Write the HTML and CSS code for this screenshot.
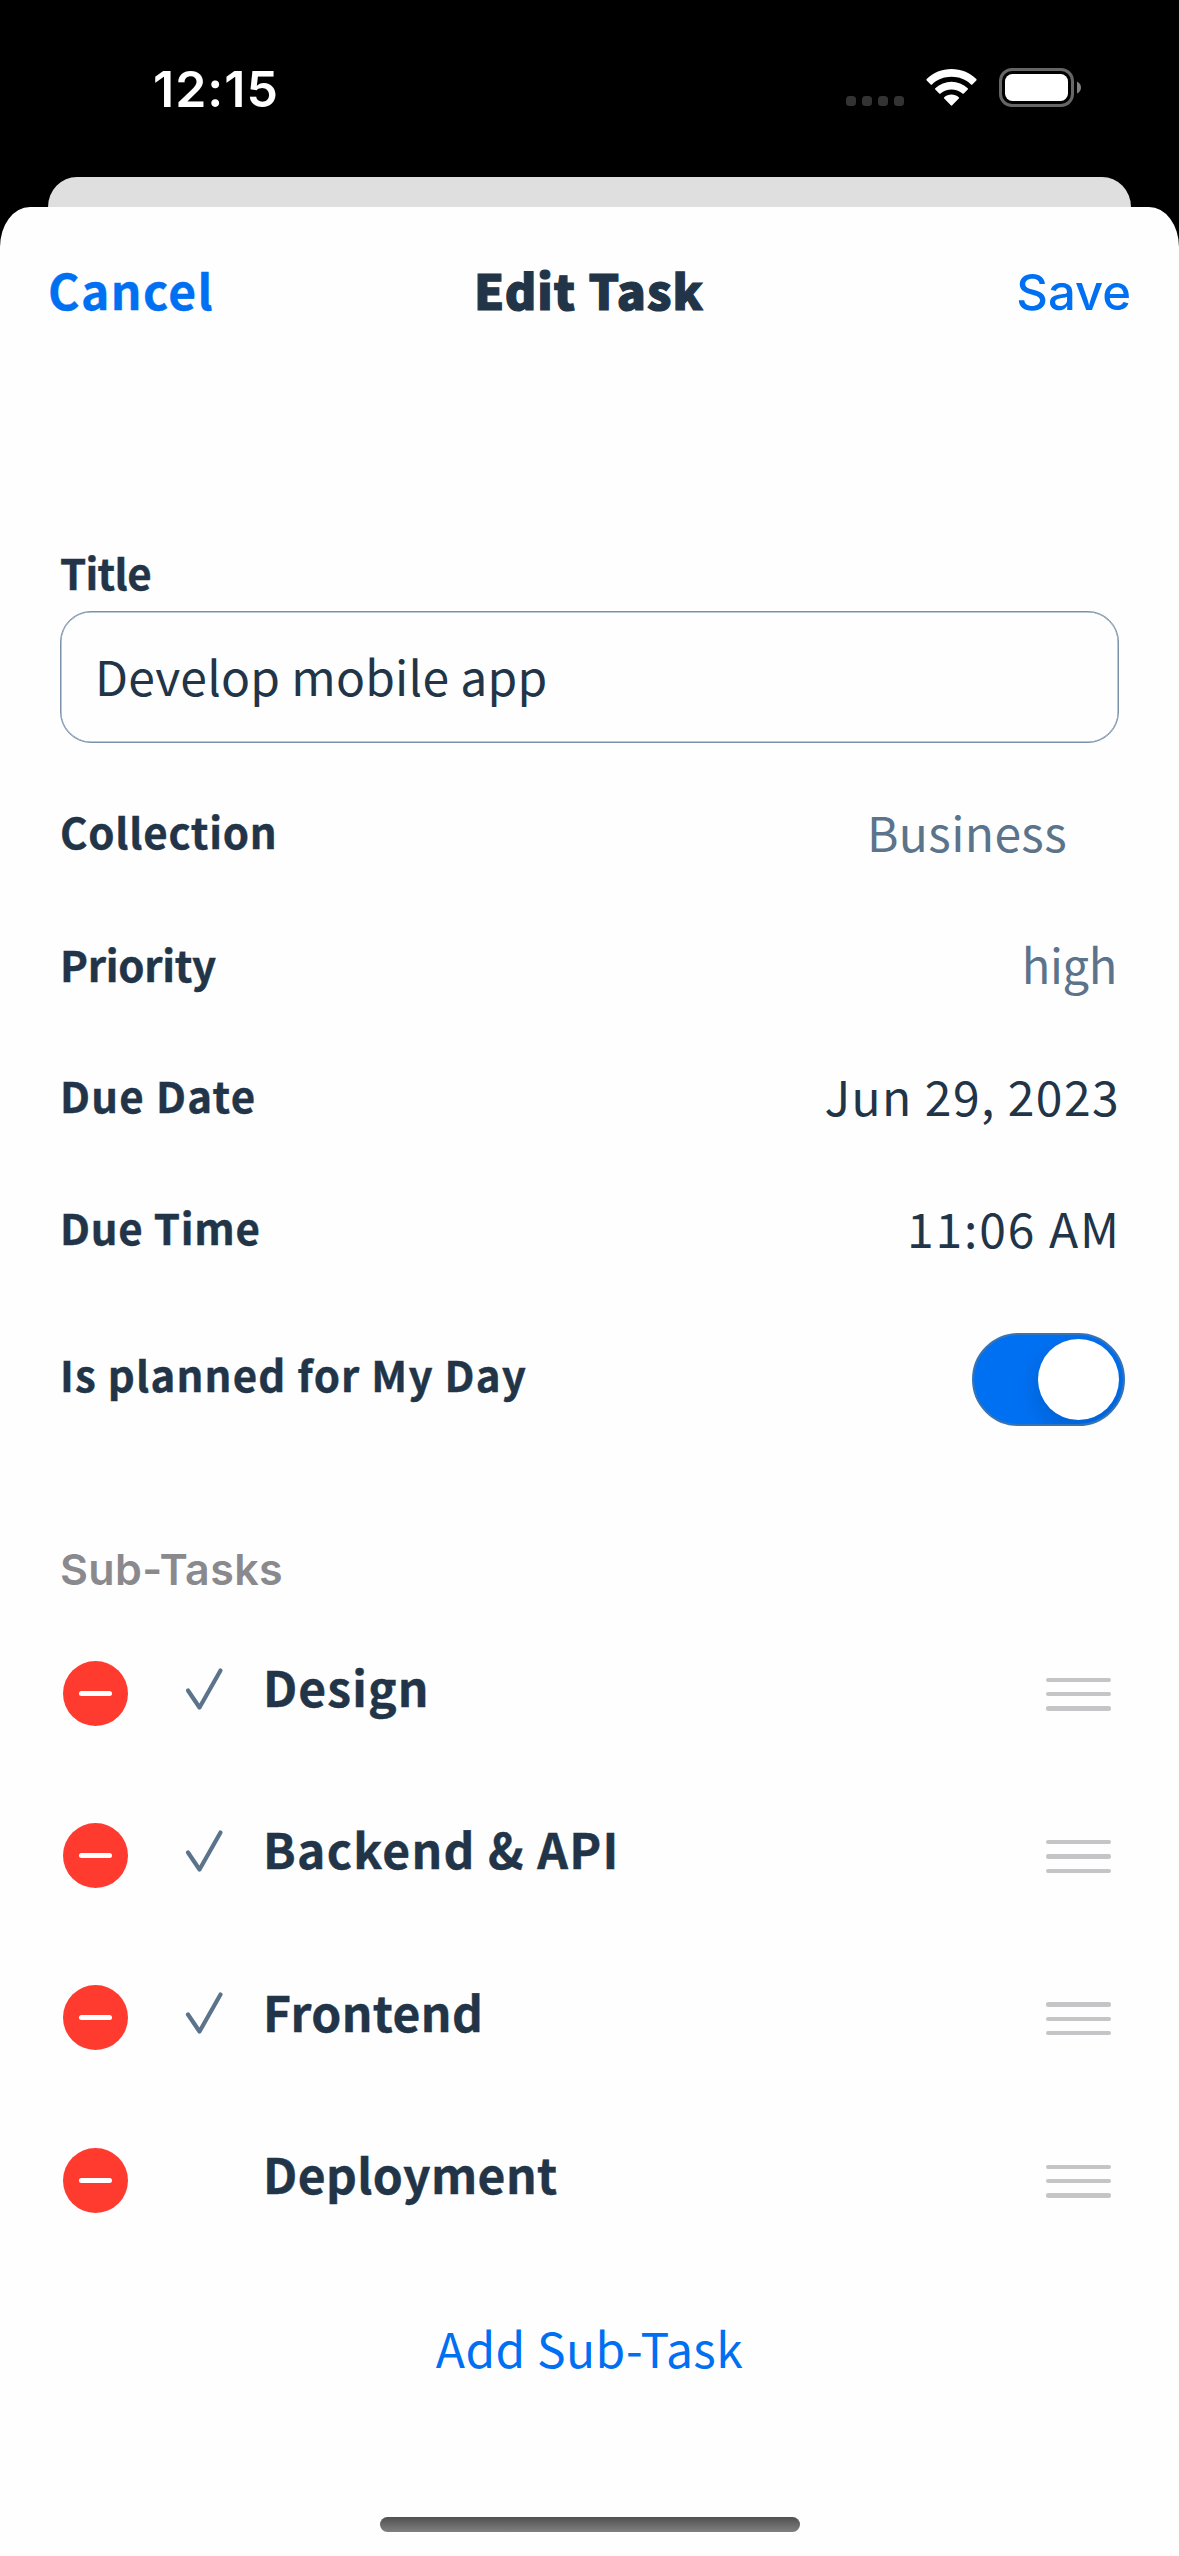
FILE: index.html
```html
<!DOCTYPE html>
<html lang="en">
<head>
  <meta charset="utf-8">
  <title>Edit Task</title>
  <link rel="stylesheet" href="styles.css">
</head>
<body>
  <div class="screen">
    <div class="status">
      <span class="time">12:15</span>
      <div class="indicators">
        <svg class="cell" width="58" height="40" viewBox="0 0 58 40">
          <rect x="0" y="29" width="10" height="10" rx="3.5"/><rect x="16" y="29" width="10" height="10" rx="3.5"/><rect x="32" y="29" width="10" height="10" rx="3.5"/><rect x="48" y="29" width="10" height="10" rx="3.5"/>
        </svg>
        <svg class="wifi" width="51" height="40" viewBox="0 0 51 40">
          <path d="M25.500 2C35 2 43.800 5.600 50.300 12Q51 12.700 50.300 13.400L46.300 17.400Q45.700 18 45 17.400C39.700 12.500 32.900 9.800 25.500 9.800S11.300 12.500 6 17.400Q5.300 18 4.700 17.400L.7 13.400Q0 12.700 .7 12C7.200 5.600 16 2 25.500 2Z"/>
          <path d="M25.500 14.800C31.500 14.800 37.200 17.100 41.700 21.200Q42.400 21.900 41.700 22.600L37.800 26.400Q37.100 27 36.400 26.400C33.400 23.900 29.500 22.500 25.500 22.500S17.600 23.900 14.600 26.400Q13.900 27 13.200 26.400L9.300 22.600Q8.600 21.900 9.300 21.200C13.800 17.100 19.500 14.800 25.500 14.800Z"/>
          <path d="M25.500 27.600C28.200 27.600 30.700 28.500 32.800 30.200Q33.500 30.900 32.800 31.600L26.200 38.300Q25.500 39 24.800 38.300L18.200 31.600Q17.500 30.900 18.200 30.200C20.300 28.500 22.800 27.600 25.500 27.600Z"/>
        </svg>
        <svg class="battery" width="82" height="40" viewBox="0 0 82 40">
          <rect class="shell" x="1.500" y="2.500" width="72" height="36" rx="11.500"/>
          <path class="nub" d="M78 14.500Q82 16.500 82 20.500T78 26.500Z"/>
          <rect class="charge" x="6" y="7" width="63" height="27" rx="7.500"/>
        </svg>
      </div>
    </div>
    <div class="peek"></div>
    <main class="sheet">
      <header class="nav">
        <a class="cancel">Cancel</a>
        <h1 class="heading">Edit Task</h1>
        <a class="save">Save</a>
      </header>
      <section class="form">
        <label class="label title-label">Title</label>
        <div class="input">Develop mobile app</div>
        <div class="row row-collection"><span class="label">Collection</span><span class="value muted business">Business</span></div>
        <div class="row row-priority"><span class="label priority">Priority</span><span class="value muted high">high</span></div>
        <div class="row row-date"><span class="label date-label">Due Date</span><span class="value date">Jun 29, 2023</span></div>
        <div class="row row-time"><span class="label">Due Time</span><span class="value clock">11:06 AM</span></div>
        <div class="row row-planned"><span class="label planned">Is planned for My Day</span><span class="toggle"><span class="knob"></span></span></div>
      </section>
      <section class="subtasks">
        <h2 class="section-title">Sub-Tasks</h2>
        <div class="task">
          <span class="remove"><span class="minus"></span></span>
          <svg class="check" width="40" height="44" viewBox="0 0 40 44"><path d="M4 23.500L15.500 40.500L36.500 3.500"/></svg>
          <span class="name design">Design</span>
          <span class="handle"><i></i><i></i><i></i></span>
        </div>
        <div class="task">
          <span class="remove"><span class="minus"></span></span>
          <svg class="check" width="40" height="44" viewBox="0 0 40 44"><path d="M4 23.500L15.500 40.500L36.500 3.500"/></svg>
          <span class="name backend">Backend &amp; API</span>
          <span class="handle"><i></i><i></i><i></i></span>
        </div>
        <div class="task">
          <span class="remove"><span class="minus"></span></span>
          <svg class="check" width="40" height="44" viewBox="0 0 40 44"><path d="M4 23.500L15.500 40.500L36.500 3.500"/></svg>
          <span class="name">Frontend</span>
          <span class="handle"><i></i><i></i><i></i></span>
        </div>
        <div class="task">
          <span class="remove"><span class="minus"></span></span>
          <span class="check"></span>
          <span class="name">Deployment</span>
          <span class="handle"><i></i><i></i><i></i></span>
        </div>
        <a class="add">Add Sub-Task</a>
      </section>
      <div class="home"></div>
    </main>
  </div>
</body>
</html>
```
FILE: styles.css
```css
* { box-sizing: border-box; }

body {
  margin: 0;
  background: #000;
  color: #223548;
  font-family: "Noto Sans CJK JP", sans-serif;
  font-size: 48px;
  line-height: 68px;
}

.screen {
  width: 1179px;
  height: 2556px;
  display: flex;
  flex-direction: column;
  overflow: hidden;
}

/* Status bar */
.status {
  height: 177px;
  flex: none;
  display: flex;
  align-items: center;
  justify-content: space-between;
  padding: 0 98px 0 153px;
}
.time {
  color: #fff;
  font: 600 50px/60px Inter, sans-serif;
  letter-spacing: 1px;
}
.indicators { display: flex; gap: 22px; margin-bottom: 3px; }
.indicators svg { display: block; }
.cell { fill: #333; }
.wifi { fill: #fff; }
.shell { fill: none; stroke: #666; stroke-width: 3; }
.nub { fill: #808080; }
.charge { fill: #fff; }

/* Sheet */
.peek {
  flex: none;
  height: 30px;
  margin: 0 48px;
  background: #dfdfdf;
  border-radius: 29px 29px 0 0 / 30px 30px 0 0;
}
.sheet {
  flex: 1;
  display: flex;
  flex-direction: column;
  background: #fefefe;
  border-radius: 30px 30px 0 0 / 40px 40px 0 0;
}
.nav {
  height: 163px;
  display: grid;
  grid-template-columns: 1fr auto 1fr;
  align-items: baseline;
  align-content: start;
  padding: 48px 47px 0 48px;
}
.cancel, .save, .add { color: #0070f2; }
.cancel {
  font-weight: 700;
  letter-spacing: 1.45px;
  -webkit-text-stroke: 0.4px;
}
.heading {
  margin: 0 2px 0 0;
  font-size: 48px;
  font-weight: 900;
  letter-spacing: 1.1px;
  -webkit-text-stroke: 1.2px;
}
.save {
  justify-self: end;
  margin-right: 1px;
  font-family: Inter, sans-serif;
  font-size: 49px;
  font-weight: 550;
}

/* Form */
.form { padding: 172px 60px 0; }
.label {
  font-size: 42px;
  line-height: 60px;
  font-weight: 700;
  letter-spacing: 0.75px;
  -webkit-text-stroke: 0.4px;
}
.title-label { display: block; letter-spacing: -0.7px; }
.priority { letter-spacing: -0.3px; }
.date-label { letter-spacing: 1.3px; }
.planned { letter-spacing: 1.2px; margin-bottom: 11px; }
.input {
  height: 132px;
  margin: 9px 0 21px;
  padding: 0 34px 4px;
  display: flex;
  align-items: center;
  border: 1px solid #7b91a8;
  border-radius: 31px;
  box-shadow: inset 0 0 0 0.5px #7b91a8;
  letter-spacing: 0.22px;
}
.row { display: flex; align-items: center; justify-content: space-between; }
.row-collection { height: 133px; }
.row-priority { height: 134px; }
.row-date { height: 127px; }
.row-time { height: 137px; }
.row-planned { height: 169px; }
.muted { color: #5b738b; }
.business { letter-spacing: 0.36px; margin-right: 52px; }
.high { font-size: 47px; letter-spacing: -0.3px; margin-right: 2px; }
.date { letter-spacing: 1.4px; margin-right: -1px; }
.clock { letter-spacing: 1.9px; margin-right: -2px; }
.toggle {
  width: 153px;
  height: 93px;
  margin-right: -6px;
  padding: 4px;
  display: flex;
  justify-content: flex-end;
  border: 2px solid #3873b4;
  border-radius: 47px;
  background: #0070f2;
  overflow: hidden;
}
.knob {
  width: 81px;
  height: 81px;
  border-radius: 50%;
  background: #fff;
  box-shadow: 0 9px 24px rgba(0, 0, 0, 0.15);
}

/* Sub-tasks */
.section-title {
  margin: 63px 0 0;
  padding-left: 60px;
  color: #8a8a8e;
  font: 600 43px/85px Inter, sans-serif;
  letter-spacing: 0.4px;
}
.task {
  height: 162.33px;
  display: flex;
  align-items: center;
  padding: 0 68px 0 63px;
}
.remove {
  width: 65px;
  height: 65px;
  display: grid;
  place-items: center;
  border-radius: 50%;
  background: #ff3b30;
}
.minus { width: 33px; height: 5px; margin-right: 1px; border-radius: 2.5px; background: #fff; }
.check {
  width: 40px;
  height: 44px;
  margin: 0 39px 9px 56px;
  fill: none;
  stroke: #5b738b;
  stroke-width: 4.2;
  stroke-linecap: round;
  stroke-linejoin: round;
}
.name {
  flex: 1;
  margin-bottom: 14px;
  font-weight: 700;
  letter-spacing: 0.42px;
  -webkit-text-stroke: 0.4px;
}
.design { letter-spacing: 1.1px; }
.backend { letter-spacing: 1.33px; }
.handle { display: grid; gap: 10px; margin-top: 2px; }
.handle i { width: 65px; height: 4.3px; border-radius: 2.2px; background: #c5c5c7; }
.add {
  display: block;
  line-height: 173px;
  text-align: center;
  letter-spacing: 0.44px;
}

.home {
  width: 420px;
  height: 15px;
  margin: auto auto 24px;
  border-radius: 8px;
  background: linear-gradient(#505050, #808080);
}
```
